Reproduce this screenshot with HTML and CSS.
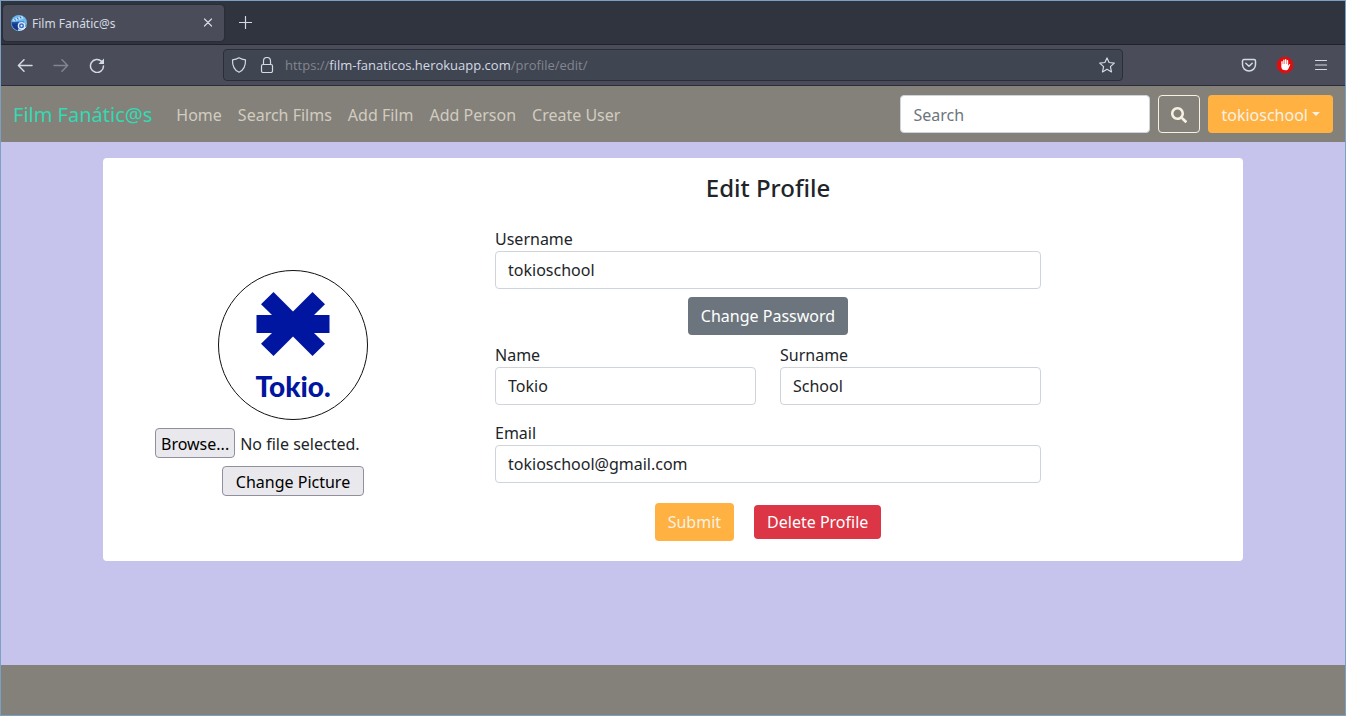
FILE: index.html
```html
<!DOCTYPE html>
<html lang="en">
<head>
<meta charset="utf-8">
<title>Film Fanátic@s</title>
<link rel="stylesheet" href="styles.css">
</head>
<body>
<div class="window">
  <div class="tabbar">
    <div class="tab">
      <svg class="favicon" width="16" height="16" viewBox="0 0 16 16" aria-hidden="true">
        <circle cx="8" cy="8" r="8" fill="#6cb8f0"/>
        <path d="M.5 7 13 6.500V9l2 2a8 8 0 0 1-14.500-2z" fill="#2455ad"/>
        <path d="M1.500 4.500 11 1l1.500 2.500L3 6.500z" fill="#c9e6fb"/>
        <path d="m3.500 4 1.200 1.500M6.200 2.800l1.300 1.700M9 1.800l1.300 1.600" stroke="#2b6cb8" stroke-width="1.200"/>
        <path d="M1 8.500h6v7A8 8 0 0 1 1 8.500z" fill="#17388b"/>
        <circle cx="10.500" cy="10.800" r="3.800" fill="#dcecff"/>
        <circle cx="10.500" cy="10.800" r="2.500" fill="#3d6fc4"/>
        <circle cx="10.500" cy="10.800" r="1" fill="#e8f2ff"/>
        <path d="M7 15c3.500.5 6.500-.7 8-3.500" stroke="#e8f2ff" fill="none"/>
      </svg>
      <span class="tab-title">Film Fanátic@s</span>
      <button class="icon-btn tab-close" type="button" aria-label="Close tab">
        <svg width="10" height="10" viewBox="0 0 10 10"><path d="m1.500 1 7 7M8.500 1l-7 7"/></svg>
      </button>
    </div>
    <button class="icon-btn tab-new" type="button" aria-label="New tab">
      <svg width="13" height="13" viewBox="0 0 13 13"><path d="M6.500.5v12M.5 6.500h12"/></svg>
    </button>
  </div>

  <div class="toolbar">
    <div class="toolbar-nav">
      <button class="icon-btn" type="button" aria-label="Back">
        <svg width="16" height="16" viewBox="0 0 16 16"><path class="thick" d="M15 8.500H1.500M7 2.800 1.400 8.500 7 14.200"/></svg>
      </button>
      <button class="icon-btn dim" type="button" aria-label="Forward">
        <svg width="16" height="16" viewBox="0 0 16 16"><path class="thick" d="M1 8.500h13.500M9 2.800l5.600 5.700L9 14.200"/></svg>
      </button>
      <button class="icon-btn" type="button" aria-label="Reload">
        <svg width="16" height="16" viewBox="0 0 16 16"><path class="thick" d="M14.500 9A6.500 6.500 0 1 1 12.600 4.400"/><path class="solid" d="M15 1.500V7H9.500z"/></svg>
      </button>
    </div>
    <div class="urlbar">
      <svg class="line-icon" width="16" height="16" viewBox="0 0 16 16"><path d="M8 .8c1.800 1.200 4 1.900 6.500 2.100.2 5.500-1.200 9.900-6.500 12.300C2.700 12.800 1.300 8.400 1.500 2.900 4 2.700 6.200 2 8 .8z"/></svg>
      <svg class="line-icon" width="16" height="16" viewBox="0 0 16 16"><rect x="2.500" y="7.500" width="11" height="8" rx="1.500"/><path d="M4.500 7.500V4a3.500 3.500 0 0 1 7 0v3.500"/></svg>
      <span class="url">https://<span class="url-host">film-fanaticos.herokuapp.com</span>/profile/edit/</span>
      <button class="icon-btn" type="button" aria-label="Bookmark">
        <svg width="16" height="16" viewBox="0 0 16 16"><path d="m8 .9 2.100 4.600 5.200.6-3.900 3.500 1.100 5.300L8 12.300l-4.500 2.600 1.100-5.300L.7 6.100l5.200-.6z"/></svg>
      </button>
    </div>
    <div class="toolbar-tools">
      <button class="icon-btn" type="button" aria-label="Save">
        <svg width="16" height="16" viewBox="0 0 16 16"><path class="thick" d="M3 2.500h10A1.500 1.500 0 0 1 14.500 4v3.500a6.500 6.500 0 0 1-13 0V4A1.500 1.500 0 0 1 3 2.500zM4.800 6.300 8 9.300l3.200-3"/></svg>
      </button>
      <button class="icon-btn" type="button" aria-label="Content blocker">
        <svg width="16" height="16" viewBox="0 0 16 16"><path fill="#e30b0b" stroke="none" d="M4.700 0h6.600L16 4.700v6.600L11.300 16H4.700L0 11.300V4.700z"/><path fill="#fff" stroke="none" d="M4.300 8V4.700a.7.7 0 0 1 1.400 0V7h.5V3.200a.7.7 0 0 1 1.400 0V7h.4V2.800a.7.7 0 0 1 1.400 0V7h.4V3.700a.7.7 0 0 1 1.400 0v5l.9-1.300c.5-.6 1.300-.3 1.100.4l-1.800 4c-.5 1-1.300 1.500-2.900 1.500-2.600 0-4.200-1-4.200-3.500z"/></svg>
      </button>
      <button class="icon-btn" type="button" aria-label="Menu">
        <svg width="16" height="16" viewBox="0 0 16 16"><path d="M2.500 3.500h11M2.500 8h11M2.500 12.500h11"/></svg>
      </button>
    </div>
  </div>

  <header class="navbar">
    <a class="brand" href="#">Film Fanátic@s</a>
    <nav class="nav-links">
      <a href="#">Home</a>
      <a href="#">Search Films</a>
      <a href="#">Add Film</a>
      <a href="#">Add Person</a>
      <a href="#">Create User</a>
    </nav>
    <form class="search">
      <input class="field search-field" type="search" placeholder="Search" aria-label="Search">
      <button class="btn btn-outline" type="button" aria-label="Search films">
        <svg width="16" height="16" viewBox="0 0 512 512" fill="currentColor"><path d="M505 442.700 405.300 343c-4.500-4.500-10.600-7-17-7H372c27.600-35.300 44-79.700 44-128C416 93.100 322.900 0 208 0S0 93.100 0 208s93.100 208 208 208c48.300 0 92.700-16.400 128-44v16.300c0 6.400 2.500 12.500 7 17l99.700 99.700c9.400 9.400 24.600 9.400 33.900 0l28.300-28.300c9.400-9.400 9.400-24.600.1-34zM208 336c-70.700 0-128-57.200-128-128 0-70.700 57.200-128 128-128 70.700 0 128 57.200 128 128 0 70.700-57.200 128-128 128z"/></svg>
      </button>
      <button class="btn btn-orange user-menu" type="button">tokioschool</button>
    </form>
  </header>

  <main class="page">
    <div class="card">
      <form class="picture">
        <svg class="avatar" width="150" height="150" viewBox="0 0 150 150" role="img" aria-label="Profile picture">
          <circle cx="75" cy="75" r="74.500" fill="#fff" stroke="#111"/>
          <g fill="#0015a0">
            <path d="M38.500 45H54L43 34.200 55.500 22 75 41.500 94.500 22 107 34.200 96 45h15.500v18H96l11 10.700L94.500 86 75 66.500 55.500 86 43 73.700 54 63H38.500z"/>
            <text class="avatar-text" x="75" y="127" text-anchor="middle">Tokio.</text>
          </g>
        </svg>
        <div class="file-row">
          <input class="file-input" type="file" id="picture-file">
          <label class="plain-btn browse" for="picture-file">Browse...</label>
          <span class="file-status">No file selected.</span>
        </div>
        <button class="plain-btn" type="button">Change Picture</button>
      </form>

      <form class="profile">
        <h1 class="title">Edit Profile</h1>
        <div class="group">
          <label for="username">Username</label>
          <input class="field" id="username" type="text" value="tokioschool">
        </div>
        <button class="btn btn-gray" type="button">Change Password</button>
        <div class="pair">
          <div class="group">
            <label for="name">Name</label>
            <input class="field" id="name" type="text" value="Tokio">
          </div>
          <div class="group">
            <label for="surname">Surname</label>
            <input class="field" id="surname" type="text" value="School">
          </div>
        </div>
        <div class="group email">
          <label for="email">Email</label>
          <input class="field" id="email" type="email" value="tokioschool@gmail.com">
        </div>
        <div class="actions">
          <button class="btn btn-orange" type="button">Submit</button>
          <button class="btn btn-red" type="button">Delete Profile</button>
        </div>
      </form>
    </div>
  </main>

  <footer class="footer"></footer>
</div>
</body>
</html>
```

FILE: styles.css
```css
* {
  box-sizing: border-box;
}

body {
  margin: 0;
  font: 16px/24px "Noto Sans", sans-serif;
  color: #212529;
}

button,
input {
  font: inherit;
}

.window {
  display: flex;
  flex-direction: column;
  min-height: 100vh;
  border: 1px solid #7ba0c4;
  background: #c6c4ec;
}

/* Browser chrome */

.tabbar {
  display: flex;
  align-items: center;
  height: 44px;
  padding: 0 2px;
  gap: 15px;
  background: #2f343f;
  border-bottom: 1px solid #20232b;
}

.tab {
  display: flex;
  align-items: center;
  width: 221px;
  height: 36px;
  padding: 0 9px 0 8px;
  gap: 5px;
  border-radius: 4px;
  background: #4a4d59;
  box-shadow: 0 0 2px #1c1f26;
  color: #d3dae3;
  font-size: 12px;
}

.tab-new {
  padding-top: 2px;
}

.tab-title {
  flex: 1;
  padding-top: 2px;
}

.icon-btn {
  display: flex;
  padding: 0;
  border: 0;
  background: none;
}

.tab-close {
  padding: 2px;
}

.icon-btn svg,
.line-icon {
  flex: none;
  fill: none;
  stroke: #d3dae3;
  stroke-width: 1.2;
  stroke-linejoin: round;
  stroke-linecap: round;
}

.icon-btn .thick {
  stroke-width: 1.5;
}

.icon-btn .solid {
  fill: #d3dae3;
  stroke: none;
}

.dim {
  opacity: 0.4;
}

.toolbar {
  display: grid;
  grid-template-columns: 222px 900px 1fr;
  align-items: center;
  height: 41px;
  background: #4a4d59;
  border-bottom: 1px solid #2b2e39;
}

.toolbar-nav,
.toolbar-tools {
  display: flex;
  gap: 20px;
  padding: 0 16px;
}

.toolbar-tools {
  justify-content: flex-end;
}

.urlbar {
  display: flex;
  align-items: center;
  height: 32px;
  padding: 0 7px;
  gap: 12px;
  border: 1px solid #2b2e39;
  border-radius: 4px;
  background: #404552;
}

.url {
  flex: 1;
  margin-left: -2px;
  font-family: "Open Sans", "Noto Sans", sans-serif;
  font-size: 13px;
  color: #83868f;
}

.url-host {
  color: #d3dae3;
}

/* Site navigation */

.navbar {
  display: flex;
  align-items: center;
  height: 56px;
  padding: 0 12px;
  gap: 16px;
  background: #84817a;
}

.brand {
  padding-top: 2px;
  font-size: 20px;
  line-height: 30px;
  color: #33d9b2;
  text-decoration: none;
}

.nav-links {
  display: flex;
  flex: 1;
}

.nav-links a {
  padding: 10px 8px 8px;
  color: #d1ccc0;
  text-decoration: none;
}

.search {
  display: flex;
  gap: 8px;
}

.field {
  display: block;
  width: 100%;
  height: 38px;
  padding: 6px 12px;
  border: 1px solid #ced4da;
  border-radius: 4px;
  background: #fff;
  color: #212529;
  appearance: none;
}

.search .search-field {
  width: 250px;
  padding: 7px 12px 5px;
}

.field::placeholder {
  color: #6c757d;
  opacity: 1;
}

.btn {
  display: flex;
  align-items: center;
  height: 38px;
  padding: 0 12px;
  border: 1px solid transparent;
  border-radius: 4px;
  color: #fff;
}

.btn-outline {
  padding-top: 2px;
  background: transparent;
  border-color: #f7f1e3;
  color: #f7f1e3;
}

.btn-orange {
  background: #ffb142;
  color: #f7f1e3;
}

.btn-gray {
  background: #6c757d;
}

.btn-red {
  height: 34px;
  background: #dc3545;
}

.user-menu {
  padding-top: 2px;
  gap: 4px;
}

.user-menu::after {
  content: "";
  border: 4px solid transparent;
  border-top-color: currentColor;
  border-bottom: 0;
  margin-bottom: 2px;
}

/* Profile card */

.page {
  flex: 1;
  padding: 16px 0;
}

.card {
  display: grid;
  grid-template-columns: 4fr 6fr 2fr;
  max-width: 1140px;
  margin: 0 auto;
  border-radius: 4px;
  background: #fff;
}

.picture {
  display: flex;
  flex-direction: column;
  align-items: center;
  padding: 112px 12px 20px;
  gap: 8px;
}

.avatar-text {
  font: 900 28px Lato, sans-serif;
}

.file-row {
  display: flex;
  align-items: center;
  width: 276px;
  gap: 5px;
}

.file-status {
  padding-top: 2px;
}

.file-input {
  position: absolute;
  width: 1px;
  height: 1px;
  opacity: 0;
}

.plain-btn {
  display: flex;
  align-items: center;
  height: 30px;
  padding: 2px 13px 0;
  border: 1px solid #8f8f9d;
  border-radius: 4px;
  background: #e9e9ed;
  color: #000;
}

.browse {
  padding: 2px 5px 0;
}

.profile {
  display: flex;
  flex-direction: column;
  align-items: center;
  padding: 16px 12px 20px;
}

.title {
  margin: 0 0 26px;
  font-size: 24px;
  line-height: 27px;
  font-weight: 500;
}

.group {
  width: 100%;
}

.group label {
  display: block;
}

.btn-gray {
  margin: 8px 0;
}

.pair {
  display: grid;
  grid-template-columns: 1fr 1fr;
  width: 100%;
  gap: 24px;
}

.email {
  margin-top: 16px;
}

.actions {
  display: flex;
  align-items: center;
  gap: 20px;
  margin-top: 20px;
}

.footer {
  height: 50px;
  background: #84817a;
}
```
